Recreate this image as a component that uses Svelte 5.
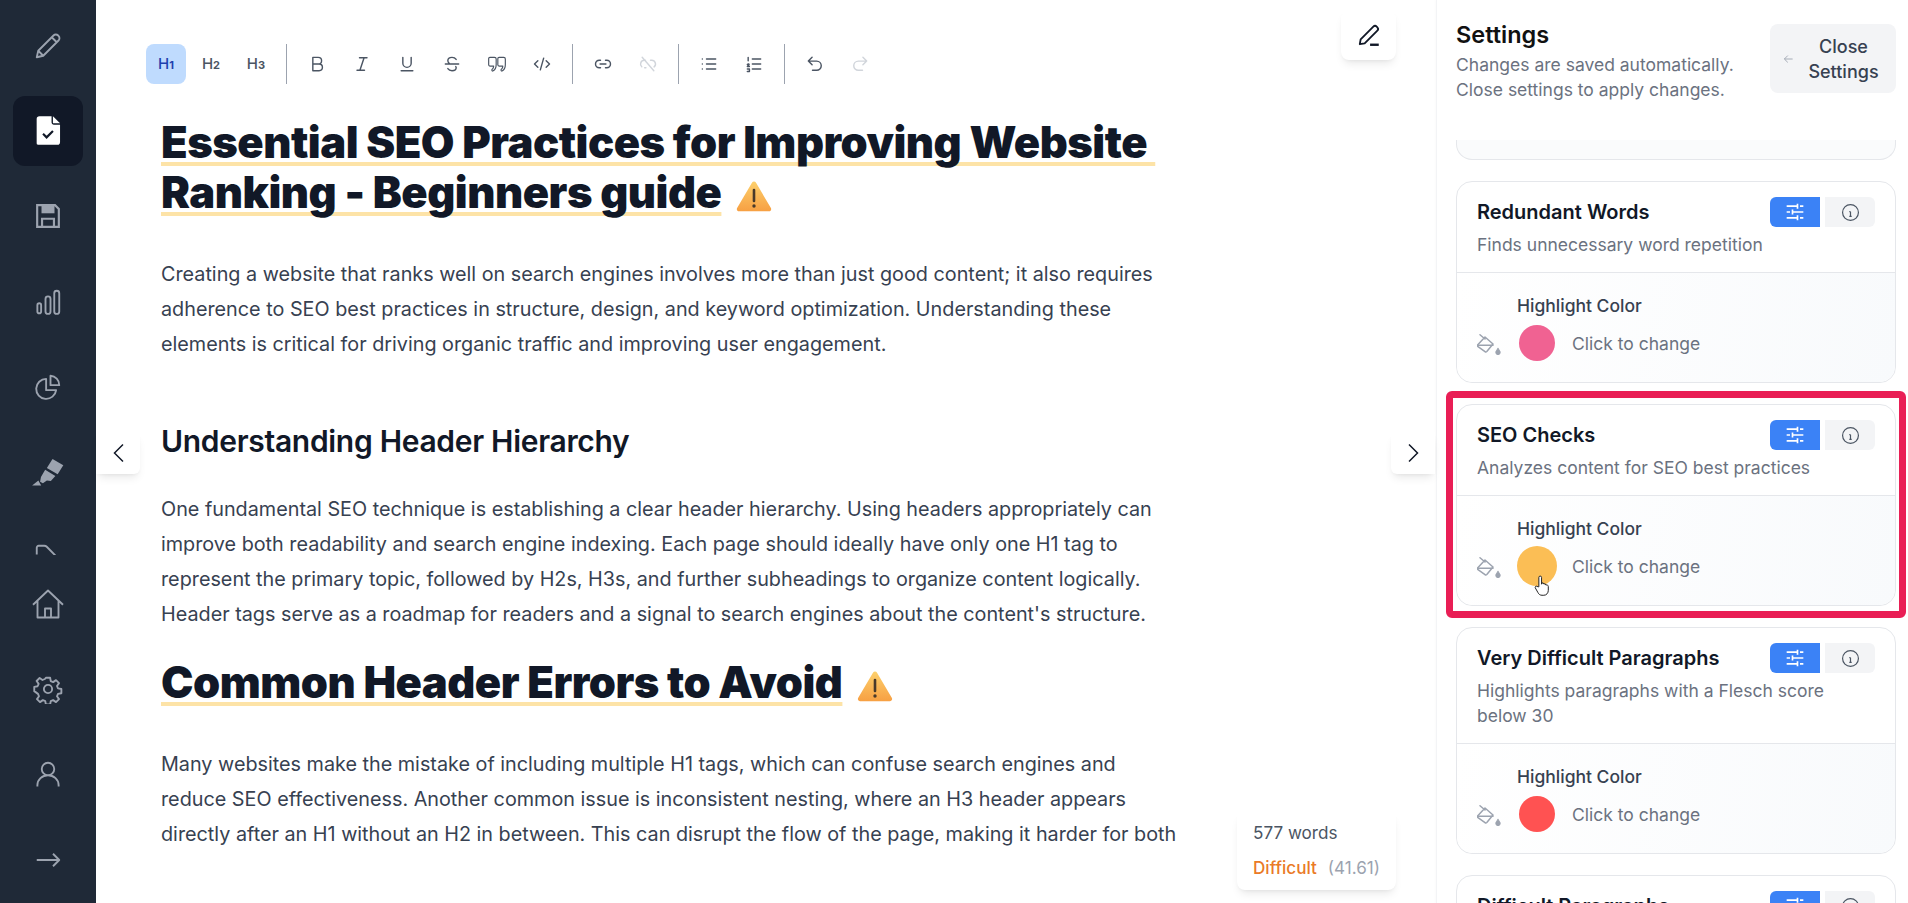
<script>
  const topNav = [
    { name: 'write', d: 'M3 21l1.200-5.200L16.400 3.600a2.600 2.600 0 0 1 3.700 0l.3.3a2.600 2.600 0 0 1 0 3.700L8.200 19.800zM4.200 15.800l4 4M15 5l4 4' },
    { name: 'check', active: true },
    { name: 'save' },
    { name: 'bars', d: 'M3.500 14.500a1.500 1.500 0 0 1 3 0v5a1.500 1.500 0 0 1-3 0zM10 9.500a2 2 0 0 1 4 0v10a2 2 0 0 1-4 0zM17 5a2 2 0 0 1 4 0v14.500a2 2 0 0 1-4 0z' },
    { name: 'pie', d: 'M10.500 5.500a8 8 0 1 0 8 9h-8zM14 3a7.500 7.500 0 0 1 7 7.500h-7z' },
    { name: 'marker' },
    { name: 'tag', d: 'M3 10V4.500A1.500 1.500 0 0 1 4.500 3H9c.8 0 1.500.3 2 .8L21 14M6.500 6.500h.01' }
  ];

  const bottomNav = [
    { name: 'home', size: 36, d: 'M2 12.500 12 3l10 9.500M5 10v11h14V10M10 21v-6h4v6' },
    { name: 'settings', d: 'M10.300 3h3.400l.5 2.700 1.900.8 2.300-1.600 2.400 2.400-1.600 2.300.8 1.900 2.700.5v3.400l-2.700.5-.8 1.900 1.600 2.300-2.400 2.400-2.300-1.600-1.900.8-.5 2.700h-3.400l-.5-2.700-1.900-.8-2.300 1.600-2.400-2.400 1.600-2.300-.8-1.900L1 13.700v-3.400l2.700-.5.8-1.900-1.600-2.300 2.400-2.400 2.300 1.600 1.900-.8zM12 8.700a3.300 3.300 0 1 0 0 6.600 3.300 3.300 0 0 0 0-6.600z' },
    { name: 'user', d: 'M12 3a5 5 0 1 0 0 10 5 5 0 0 0 0-10zM3.500 22v-1a8.500 8 0 0 1 17 0v1' },
    { name: 'expand', d: 'M3 12h18M16 7l5 5-5 5' }
  ];

  const cards = [
    { title: 'Redundant Words', desc: 'Finds unnecessary word repetition', color: '#f06292' },
    { title: 'SEO Checks', desc: 'Analyzes content for SEO best practices', color: '#fbbe55', picked: true },
    { title: 'Very Difficult Paragraphs', desc: 'Highlights paragraphs with a Flesch score below 30', color: '#ff5252' },
    { title: 'Difficult Paragraphs', desc: 'Highlights paragraphs with a Flesch score below 50', color: '#ff8a65' }
  ];
</script>

{#snippet warning()}
  <svg class="warn" viewBox="0 0 36 32" aria-hidden="true">
    <defs>
      <linearGradient id="warnfill" x1="0" y1="0" x2="0" y2="1">
        <stop offset="0" stop-color="#fdd06c" />
        <stop offset="1" stop-color="#f7a043" />
      </linearGradient>
    </defs>
    <path d="M18 1.500c.8 0 1.500.4 1.900 1.100l15 25.500c.8 1.400-.2 3.100-1.900 3.100H3c-1.700 0-2.700-1.700-1.900-3.100l15-25.500c.4-.7 1.100-1.100 1.900-1.100z" fill="url(#warnfill)" />
    <path d="M18 10v11" stroke="#4a3a2a" stroke-width="2.600" stroke-linecap="round" />
    <circle cx="18" cy="26" r="1.700" fill="#4a3a2a" />
  </svg>
{/snippet}

{#snippet navIcon(item)}
  <div class="nav-item" class:active={item.active}>
    {#if item.name === 'check'}
      <svg viewBox="0 0 24 24" width="34" height="34">
        <path d="M6 1.500h8.500v4.500a1.500 1.500 0 0 0 1.500 1.500h4.500V20a2 2 0 0 1-1 1.700H5A1 1 0 0 1 4 20.500V3.500a2 2 0 0 1 2-2z" fill="#fff" />
        <path d="M15.500 1.500l5 5h-5z" fill="#fff" />
        <path d="M8.500 14l2.500 2.500 4.500-4.500" fill="none" stroke="#111827" stroke-width="1.500" />
      </svg>
    {:else if item.name === 'save'}
      <svg viewBox="0 0 24 24" width="26" height="26">
        <path d="M2 2h16.500L22 5.500V22H2z" fill="none" stroke="#9ca3af" stroke-width="2" />
        <path d="M6 2h12v7.500H6z" fill="#9ca3af" />
        <path d="M6.500 22v-7.500h11V22" fill="none" stroke="#9ca3af" stroke-width="2" />
      </svg>
    {:else if item.name === 'marker'}
      <svg viewBox="0 0 30 26" width="34" height="30">
        <path d="M19 1.500 28.500 7 23.500 15 14 9.500z" fill="#9ca3af" />
        <path d="M12.500 11 21.500 16.500 17.500 21 14 20.500 10.500 23 8 21.500 8.800 17.500z" fill="#9ca3af" />
        <path d="M6.500 20.500 1 25h8z" fill="#9ca3af" />
      </svg>
    {:else}
      <svg viewBox="0 0 24 24" width={item.size ?? 30} height={item.size ?? 30} fill="none" stroke="#9ca3af" stroke-width={item.size ? 1.250 : 1.500} stroke-linejoin="round">
        <path d={item.d} />
      </svg>
    {/if}
  </div>
{/snippet}

{#snippet tool(d, off = false, weight = 1.700)}
  <button class="tool" class:off>
    <svg viewBox="0 0 24 24" width="20" height="20" fill="none" stroke="currentColor" stroke-width={weight} stroke-linecap="round" stroke-linejoin="round">
      <path {d} />
    </svg>
  </button>
{/snippet}

<div class="app">
  <aside class="sidebar">
    <nav class="nav-top">
      {#each topNav as item}
        {@render navIcon(item)}
      {/each}
    </nav>
    <nav class="nav-bottom">
      {#each bottomNav as item}
        {@render navIcon(item)}
      {/each}
    </nav>
  </aside>

  <main class="editor">
    <div class="toolbar">
      <button class="tool head on">H<small>1</small></button>
      <button class="tool head">H<small>2</small></button>
      <button class="tool head">H<small>3</small></button>
      <span class="divider"></span>
      {@render tool('M7 4h6.500a4 4 0 0 1 0 8H7zM7 12h7.500a4 4 0 0 1 0 8H7z')}
      {@render tool('M9 4.500h9M6 19.500h9M14.500 4.500l-5 15')}
      {@render tool('M7 4v7a5 5 0 0 0 10 0V4M5 20h14')}
      {@render tool('M17 6.500C16 5 14.500 4 12 4 9 4 7 5.500 7 8c0 1.500.7 2.500 2 3.500M4 12h16M16.500 15c.3.500.5 1 .5 1.500 0 2.500-2 3.500-5 3.500-2.500 0-4-1-5-2.500')}
      {@render tool('M3.500 4h5.500a2 2 0 0 1 2 2v7c0 3-1 6-4 7.500-1.500 0-1.500-2-.5-2.500 1-.8 1.500-2 1.500-3.500H3.500a1.500 1.500 0 0 1-1.500-1.500V5.500A1.500 1.500 0 0 1 3.500 4zM14.500 4H20a2 2 0 0 1 2 2v7c0 3-1 6-4 7.500-1.500 0-1.500-2-.5-2.500 1-.8 1.500-2 1.500-3.500h-4.500a1.500 1.500 0 0 1-1.500-1.500V5.500A1.500 1.500 0 0 1 14.500 4z', false, 1.400)}
      {@render tool('M7 8l-4 4 4 4M17 8l4 4-4 4M14 5l-4 14')}
      <span class="divider"></span>
      {@render tool('M9 7.500H7.500a4.500 4.500 0 0 0 0 9H9M15 7.500h1.500a4.500 4.500 0 0 1 0 9H15M8.500 12h7')}
      {@render tool('M9 7.500H7.500a4.500 4.500 0 0 0-3 7.800M15 7.500h1.500a4.500 4.500 0 0 1 2.800 8M9.500 16.500H8M5 4l14 16', true)}
      <span class="divider"></span>
      {@render tool('M9 6h11M9 12h11M9 18h11M4 6h.01M4 12h.01M4 18h.01')}
      {@render tool('M10 6h10M10 12h10M10 18h10M5 4v4M4 12.500c1-1 2.500-.5 2 .5l-2 2h2.500M4 18h2.500v3H4')}
      <span class="divider"></span>
      {@render tool('M8.500 4 4 8.500 8.500 13M4 8.500h10a5.500 5.500 0 0 1 0 11H9')}
      {@render tool('M15.500 4 20 8.500 15.500 13M20 8.500H10a5.500 5.500 0 0 0 0 11h5', true)}
    </div>

    <article class="doc">
      <h1><span class="marked">Essential SEO Practices for Improving Website&nbsp;</span> <span class="marked">Ranking - Beginners guide</span> {@render warning()}</h1>
      <p>Creating a website that ranks well on search engines involves more than just good content; it also requires adherence to SEO best practices in structure, design, and keyword optimization. Understanding these elements is critical for driving organic traffic and improving user engagement.</p>
      <h2>Understanding Header Hierarchy</h2>
      <p>One fundamental SEO technique is establishing a clear header hierarchy. Using headers appropriately can improve both readability and search engine indexing. Each page should ideally have only one H1 tag to represent the primary topic, followed by H2s, H3s, and further subheadings to organize content logically. Header tags serve as a roadmap for readers and a signal to search engines about the content's structure.</p>
      <h1 class="second"><span class="marked">Common Header Errors to Avoid</span> {@render warning()}</h1>
      <p>Many websites make the mistake of including multiple H1 tags, which can confuse search engines and reduce SEO effectiveness. Another common issue is inconsistent nesting, where an H3 header appears directly after an H1 without an H2 in between. This can disrupt the flow of the page, making it harder for both</p>
    </article>

    <button class="float pen" aria-label="Edit">
      <svg viewBox="0 0 24 24" width="26" height="26" fill="none" stroke="#111827" stroke-width="1.700" stroke-linejoin="round">
        <path d="M3.500 20.500l.8-4.500L16 4.300a2.200 2.200 0 0 1 3.100 0l.6.6a2.200 2.200 0 0 1 0 3.100L8 19.700z" />
        <path d="M13 21h8" stroke-width="2.200" />
      </svg>
    </button>
    <button class="float page prev" aria-label="Previous">
      <svg viewBox="0 0 24 24" width="24" height="24" fill="none" stroke="#111827" stroke-width="1.500"><path d="M17 3.500 8.500 12l8.500 8.500" /></svg>
    </button>
    <button class="float page next" aria-label="Next">
      <svg viewBox="0 0 24 24" width="24" height="24" fill="none" stroke="#111827" stroke-width="1.500"><path d="M8 3.500l8.500 8.500L8 20.500" /></svg>
    </button>
    <div class="float stats">
      <div class="words">577 words</div>
      <div class="score"><span class="grade">Difficult</span><span class="num">(41.61)</span></div>
    </div>
  </main>

  <aside class="settings">
    <header class="settings-head">
      <div>
        <h3>Settings</h3>
        <p>Changes are saved automatically.<br />Close settings to apply changes.</p>
      </div>
      <button class="close">
        <svg viewBox="0 0 16 16" width="16" height="16" fill="none" stroke="#9ca3af" stroke-width="1.300"><path d="M14 8H2M7 3 2 8l5 5" /></svg>
        <span>Close Settings</span>
      </button>
    </header>

    <div class="list">
      <div class="card-tail"></div>
      {#each cards as card}
        <section class="card" class:picked={card.picked}>
          <div class="card-top">
            <div class="card-row">
              <h4>{card.title}</h4>
              <div class="switch">
                <span class="sw blue">
                  <svg viewBox="0 0 24 24" width="20" height="20" fill="none" stroke="#fff" stroke-width="2"><path d="M2 5h12M18 5h4M15 2v6M2 12h4M10 12h12M9 9v6M2 19h12M18 19h4M15 16v6" /></svg>
                </span>
                <span class="sw grey">
                  <svg viewBox="0 0 24 24" width="19" height="19" fill="none" stroke="#4b5563" stroke-width="1.500"><circle cx="12" cy="12" r="10" /><path d="M12 11v6M10.500 11H12M10.500 17h3M12 7h.01" /></svg>
                </span>
              </div>
            </div>
            <p class="desc">{card.desc}</p>
          </div>
          <div class="card-body">
            <svg class="bucket" viewBox="0 0 24 22" width="24" height="22" fill="none" stroke="#9ca3af" stroke-width="1.500" stroke-linejoin="round" stroke-linecap="round">
              <path d="M3 .8 8 5M8 3l8 7-6.200 7.500c-.5.500-1.200.6-1.800.1L1 12.600c-.7-.5-.7-1.300-.2-1.900z" />
              <path d="M1 11.200h15" />
              <path d="M21 14.500c1.300 1.600 2.200 2.700 2.200 3.900a2.200 2.200 0 0 1-4.400 0c0-1.200.9-2.300 2.200-3.900z" fill="#9ca3af" stroke-width="1" />
            </svg>
            <div class="picker">
              <div class="label">Highlight Color</div>
              <div class="swatch-row">
                <span class="swatch" style="background: {card.color}"></span>
                <span class="hint">Click to change</span>
              </div>
            </div>
            {#if card.picked}
              <svg class="cursor" viewBox="0 0 20 26" width="18" height="24">
                <path d="M6.500 14V3.500a1.500 1.500 0 0 1 3 0V11l.5-1.500 1.500.3.500 1 1.500-.3.7 1.300 1.500 0c1 .5 1.300 1 1.300 2v4c0 3-2 5.500-5 5.500H10c-2 0-3.500-1-4.500-3L2.500 15c-.5-1 .7-2.500 2-1.500z" fill="#fff" stroke="#222" stroke-width="1.100" stroke-linejoin="round" />
              </svg>
            {/if}
          </div>
        </section>
      {/each}
    </div>
  </aside>
</div>

<style>
  :global(body) {
    margin: 0;
    background: #fff;
    font-family: Inter, "Liberation Sans", sans-serif;
  }

  .app {
    display: flex;
    height: 903px;
    overflow: hidden;
  }

  .sidebar {
    width: 96px;
    flex: none;
    background: #1f2937;
    display: flex;
    flex-direction: column;
  }

  .nav-top {
    height: 544px;
    padding-top: 11px;
    overflow: hidden;
    flex: none;
  }

  .nav-bottom {
    margin-top: 14px;
  }

  .nav-top,
  .nav-bottom {
    display: flex;
    flex-direction: column;
    align-items: center;
    gap: 15.200px;
  }

  .nav-item {
    width: 70px;
    height: 70px;
    flex: none;
    border-radius: 12px;
    display: flex;
    align-items: center;
    justify-content: center;
  }

  .nav-item.active {
    background: #111827;
  }

  .editor {
    flex: 1;
    position: relative;
    min-width: 0;
    height: 861px;
  }

  .toolbar {
    display: flex;
    align-items: center;
    gap: 5px;
    padding: 44px 0 0 50px;
  }

  .tool {
    width: 40px;
    height: 40px;
    border: 0;
    padding: 0;
    background: none;
    border-radius: 8px;
    color: #4b5563;
    display: flex;
    align-items: center;
    justify-content: center;
    font-family: inherit;
  }

  .tool.off {
    color: #d1d5db;
  }

  .tool.head {
    font-size: 15px;
    font-weight: 500;
    align-items: baseline;
    line-height: 40px;
  }

  .tool.head small {
    font-size: 11px;
    font-weight: 700;
  }

  .tool.on {
    background: #bfdbfe;
    color: #1e40af;
  }

  .divider {
    width: 1px;
    height: 40px;
    background: #9ca3af;
    margin: 0 5px;
  }

  .doc {
    padding: 33px 0 0 65px;
    width: 1021px;
    height: 744px;
    overflow: hidden;
    color: #111827;
  }

  h1 {
    margin: 0 0 40px;
    font-size: 43.500px;
    line-height: 50px;
    font-weight: 900;
    letter-spacing: -0.5px;
  }

  h1.second {
    margin: 25px 0 40px;
  }

  .marked {
    text-decoration: underline;
    text-decoration-color: #fde3a7;
    text-decoration-thickness: 4px;
    text-underline-offset: 4px;
    text-decoration-skip-ink: none;
  }

  .warn {
    width: 36px;
    height: 32px;
    margin-left: 6px;
    vertical-align: -4px;
  }

  h2 {
    margin: 59px 0 31px;
    font-size: 30px;
    line-height: 40px;
    font-weight: 600;
    letter-spacing: -0.3px;
  }

  .doc p {
    margin: 0;
    font-size: 19.800px;
    line-height: 35px;
    color: #374151;
  }

  .float {
    position: absolute;
    background: #fff;
    border: 0;
    box-shadow: 0 6px 10px -3px rgba(0, 0, 0, 0.1), 0 2px 4px -2px rgba(0, 0, 0, 0.06);
    display: flex;
    align-items: center;
    justify-content: center;
  }

  .pen {
    left: 1245px;
    top: 10px;
    width: 55px;
    height: 50px;
    border-radius: 8px;
  }

  .page {
    top: 432px;
    width: 44px;
    height: 42px;
  }

  .prev {
    left: 0;
    border-radius: 0 6px 6px 0;
  }

  .next {
    right: 0;
    border-radius: 6px 0 0 6px;
  }

  .stats {
    left: 1141px;
    top: 813px;
    width: 159px;
    height: 77px;
    box-sizing: border-box;
    padding: 9px 16px;
    border-radius: 0 0 8px 8px;
    flex-direction: column;
    align-items: flex-start;
    justify-content: flex-start;
    gap: 13px;
    font-size: 17.100px;
    line-height: 22px;
  }

  .words {
    color: #4b5563;
  }

  .grade {
    color: #ea7a26;
    font-weight: 500;
    margin-right: 11px;
  }

  .num {
    color: #9ca3af;
  }

  .settings {
    width: 472px;
    flex: none;
    border-left: 1px solid #f3f4f6;
    box-shadow: -1px 0 2px rgba(0, 0, 0, 0.02);
    display: flex;
    flex-direction: column;
    margin-left: 1px;
    box-sizing: border-box;
  }

  .settings-head {
    display: flex;
    justify-content: space-between;
    padding: 20px 12px 0 19px;
    height: 120px;
    box-sizing: border-box;
    flex: none;
  }

  .settings-head h3 {
    margin: 0;
    font-size: 23.500px;
    line-height: 30px;
    font-weight: 600;
    color: #111;
  }

  .settings-head p {
    margin: 2px 0 0;
    font-size: 17.500px;
    line-height: 25px;
    color: #6b7280;
  }

  .close {
    width: 126px;
    height: 69px;
    margin-top: 4px;
    border: 0;
    border-radius: 8px;
    background: #f3f4f6;
    display: flex;
    align-items: center;
    gap: 7px;
    padding: 0 10px 0 13px;
    font-family: inherit;
    font-size: 18px;
    line-height: 25px;
    color: #374151;
    font-weight: 500;
    text-align: center;
  }

  .list {
    padding: 20px 12px 0 19px;
    display: flex;
    flex-direction: column;
    gap: 21px;
  }

  .card-tail {
    height: 20px;
    border: 1px solid #e5e7eb;
    border-top: 0;
    border-radius: 0 0 16px 16px;
    background: #fafbfc;
    box-sizing: border-box;
  }

  .card {
    border: 1px solid #e5e7eb;
    border-radius: 16px;
    flex: none;
    position: relative;
  }

  .card.picked::after {
    content: "";
    position: absolute;
    inset: -14px -11px -13px -11px;
    border: 7px solid #e91e55;
    border-radius: 6px;
  }

  .card-top {
    padding: 15px 20px 15px;
    border-bottom: 1px solid #e5e7eb;
  }

  .card-row {
    display: flex;
    justify-content: space-between;
    align-items: center;
  }

  h4 {
    margin: 0;
    font-size: 20px;
    line-height: 30px;
    font-weight: 600;
    color: #111827;
  }

  .switch {
    display: flex;
    gap: 5px;
  }

  .sw {
    width: 50px;
    height: 30px;
    display: flex;
    align-items: center;
    justify-content: center;
  }

  .blue {
    background: #3b82f6;
    border-radius: 6px 0 0 6px;
  }

  .grey {
    background: #f3f4f6;
    border-radius: 0 6px 6px 0;
  }

  .desc {
    margin: 5px 0 0;
    font-size: 17.500px;
    line-height: 25px;
    color: #6b7280;
  }

  .card-body {
    position: relative;
    display: flex;
    align-items: flex-end;
    padding: 19.500px 20px 21px;
    background: linear-gradient(100deg, #fff, #f8fafc);
    border-radius: 0 0 16px 16px;
  }

  .bucket {
    flex: none;
    margin: 0 16px 5px 0;
  }

  .label {
    font-size: 17.500px;
    line-height: 25px;
    font-weight: 500;
    color: #374151;
  }

  .swatch-row {
    display: flex;
    align-items: center;
    gap: 17px;
    margin-top: 7.500px;
    padding-left: 2px;
  }

  .swatch {
    width: 36px;
    height: 36px;
    border-radius: 50%;
  }

  .picked .swatch {
    width: 40px;
    height: 40px;
    margin: -2px;
  }

  .hint {
    font-size: 17.500px;
    line-height: 25px;
    color: #6b7280;
  }

  .cursor {
    position: absolute;
    left: 76px;
    top: 78px;
  }
</style>
